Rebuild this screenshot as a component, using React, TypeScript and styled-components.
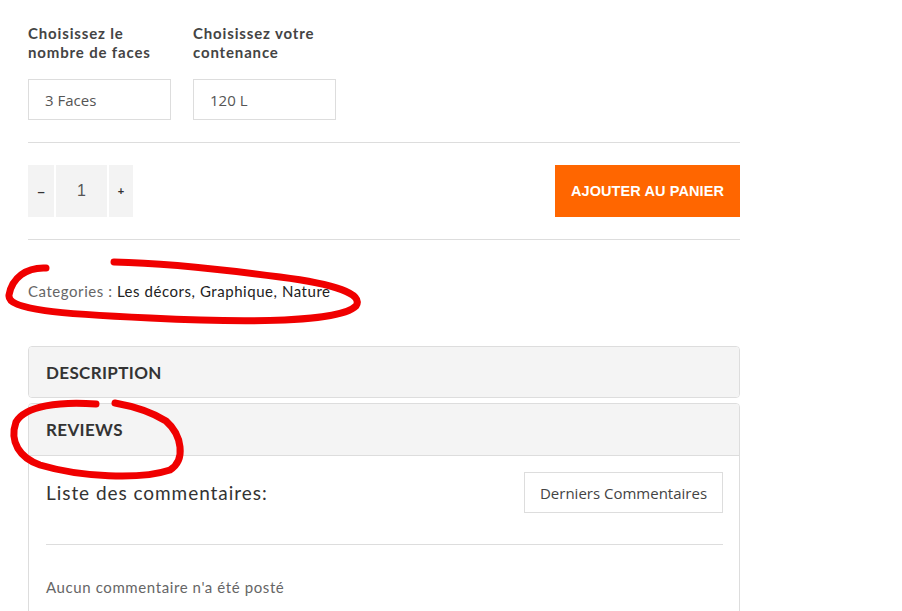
import React from "react";
import styled, { createGlobalStyle } from "styled-components";

const Global = createGlobalStyle`
  html, body { margin: 0; padding: 0; background: #fff; }
  body { font-family: "Lato", "Open Sans", sans-serif; color: #333; }
  * { box-sizing: border-box; }
`;

const Page = styled.div`
  position: relative;
  width: 902px;
  height: 611px;
  overflow: hidden;
  padding: 24px 0 0 28px;
`;

const Content = styled.div`
  width: 712px;
`;

const OptionsRow = styled.div`
  display: flex;
  gap: 22px;
`;

const OptionGroup = styled.div`
  width: 143px;
  display: flex;
  flex-direction: column;
`;

const OptionLabel = styled.div`
  font-family: "Lato", sans-serif;
  font-weight: 700;
  font-size: 15px;
  letter-spacing: 0.85px;
  line-height: 19px;
  color: #444;
  height: 38px;
  margin-bottom: 17px;
  white-space: nowrap;
`;

const SelectBox = styled.div`
  height: 41px;
  border: 1px solid #ddd;
  display: flex;
  align-items: center;
  padding-left: 16px;
  font-family: "Open Sans", sans-serif;
  font-size: 15px;
  color: #555;
`;

const Divider = styled.div<{ $top: number }>`
  height: 1px;
  background: #ddd;
  margin-top: ${(p) => p.$top}px;
`;

const CartRow = styled.div`
  margin-top: 22px;
  height: 52px;
  display: flex;
  justify-content: space-between;
`;

const Qty = styled.div`
  display: flex;
  gap: 2px;
  height: 52px;
`;

const QtyPart = styled.div<{ $w: number; $size: number; $bold?: boolean }>`
  width: ${(p) => p.$w}px;
  background: #f3f3f3;
  display: flex;
  align-items: center;
  justify-content: center;
  font-family: "Liberation Sans", Arial, sans-serif;
  font-size: ${(p) => p.$size}px;
  font-weight: ${(p) => (p.$bold ? 700 : 400)};
  color: ${(p) => (p.$bold ? "#333" : "#555")};
`;

const AddButton = styled.button`
  width: 185px;
  height: 52px;
  border: none;
  background: #ff6600;
  color: #fff;
  font-family: "Liberation Sans", Arial, sans-serif;
  font-weight: 700;
  font-size: 14.5px;
  letter-spacing: 0.1px;
  padding: 0;
`;

const Categories = styled.div`
  margin-top: 41px;
  margin-bottom: 45px;
  font-family: "Lato", sans-serif;
  font-size: 15px;
  letter-spacing: 0.55px;
  line-height: 20px;
  color: #666;
`;

const CatLinks = styled.span`
  color: #222;
`;

const Panel = styled.div<{ $open?: boolean }>`
  border: 1px solid #ddd;
  border-radius: 4px;
  margin-bottom: 5px;
  ${(p) => (p.$open ? "border-bottom-left-radius: 0; border-bottom-right-radius: 0;" : "")}
  overflow: hidden;
`;

const PanelHeader = styled.div<{ $open?: boolean }>`
  height: ${(p) => (p.$open ? 52 : 50)}px;
  background: #f4f4f4;
  display: flex;
  align-items: center;
  padding-left: 17px;
  font-family: "Lato", sans-serif;
  font-weight: 700;
  font-size: 17px;
  letter-spacing: 0.35px;
  color: #333;
  ${(p) => (p.$open ? "border-bottom: 1px solid #ddd;" : "")}
`;

const PanelBody = styled.div`
  padding: 16px 16px 40px 17px;
  background: #fff;
`;

const ListHead = styled.div`
  display: flex;
  align-items: center;
  justify-content: space-between;
  height: 41px;
`;

const ListTitle = styled.div`
  font-family: "Lato", sans-serif;
  font-size: 19px;
  letter-spacing: 0.95px;
  color: #333;
`;

const SortButton = styled.div`
  width: 199px;
  height: 41px;
  border: 1px solid #ddd;
  display: flex;
  align-items: center;
  justify-content: center;
  font-family: "Open Sans", sans-serif;
  font-size: 15px;
  color: #444;
`;

const BodyLine = styled.div`
  height: 1px;
  background: #ddd;
  margin-top: 31px;
`;

const Empty = styled.div`
  margin-top: 33px;
  font-family: "Lato", sans-serif;
  font-size: 15px;
  letter-spacing: 0.6px;
  color: #666;
`;

const Scribbles = styled.svg`
  position: absolute;
  left: 0;
  top: 0;
  pointer-events: none;
`;

export default function App() {
  return (
    <>
      <Global />
      <Page>
        <Content>
          <OptionsRow>
            <OptionGroup>
              <OptionLabel>
                Choisissez le
                <br />
                nombre de faces
              </OptionLabel>
              <SelectBox>3 Faces</SelectBox>
            </OptionGroup>
            <OptionGroup>
              <OptionLabel>
                Choisissez votre
                <br />
                contenance
              </OptionLabel>
              <SelectBox>120 L</SelectBox>
            </OptionGroup>
          </OptionsRow>
          <Divider $top={22} />
          <CartRow>
            <Qty>
              <QtyPart $w={26} $size={13} $bold>–</QtyPart>
              <QtyPart $w={51} $size={16}>1</QtyPart>
              <QtyPart $w={24} $size={11} $bold>+</QtyPart>
            </Qty>
            <AddButton>AJOUTER AU PANIER</AddButton>
          </CartRow>
          <Divider $top={22} />
          <Categories>
            Categories : <CatLinks>Les décors, Graphique, Nature</CatLinks>
          </Categories>
          <Panel>
            <PanelHeader>DESCRIPTION</PanelHeader>
          </Panel>
          <Panel $open>
            <PanelHeader $open>REVIEWS</PanelHeader>
            <PanelBody>
              <ListHead>
                <ListTitle>Liste des commentaires:</ListTitle>
                <SortButton>Derniers Commentaires</SortButton>
              </ListHead>
              <BodyLine />
              <Empty>Aucun commentaire n'a été posté</Empty>
            </PanelBody>
          </Panel>
        </Content>
        <Scribbles width="902" height="611" viewBox="0 0 902 611">
          <g fill="none" stroke="#f00000" strokeWidth="7" strokeLinecap="round" strokeLinejoin="round">
            <path d="M46,268 C26,267 12,278 9,295 C7,310 60,314 150,318 C250,323 340,322 356,306 C364,294 335,284 280,277 C220,269 160,263 114,262" />
            <path d="M96,404 C60,401 25,406 16,422 C9,442 20,458 40,465 C80,477 140,480 170,470 C186,460 182,435 166,421 C150,411 132,406 115,403" />
          </g>
        </Scribbles>
      </Page>
    </>
  );
}
